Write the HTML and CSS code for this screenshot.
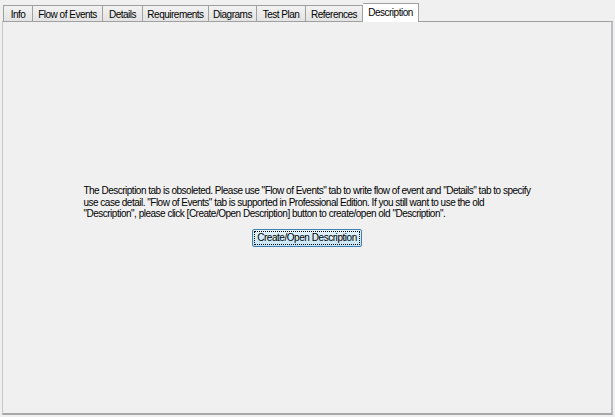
FILE: index.html
```html
<!DOCTYPE html>
<html>
<head>
<meta charset="utf-8">
<link rel="stylesheet" href="styles.css">
</head>
<body>
<div class="app">
  <div class="tabs">
    <div class="tab t-info">Info</div>
    <div class="tab t-flow">Flow of Events</div>
    <div class="tab t-details">Details</div>
    <div class="tab t-req">Requirements</div>
    <div class="tab t-diag">Diagrams</div>
    <div class="tab t-test">Test Plan</div>
    <div class="tab t-ref">References</div>
    <div class="tab active t-desc">Description</div>
  </div>
  <div class="panel">
    <div class="content">
      <p class="msg">The Description tab is obsoleted. Please use "Flow of Events" tab to write flow of event and "Details" tab to specify<br>use case detail. "Flow of Events" tab is supported in Professional Edition. If you still want to use the old<br>"Description", please click [Create/Open Description] button to create/open old "Description".</p>
      <button class="btn"><span class="focus">Create/Open Description</span></button>
    </div>
  </div>
</div>
</body>
</html>
```

FILE: styles.css
```css
html, body {
  margin: 0;
  padding: 0;
  background: #f0f0f0;
}
body {
  width: 615px;
  height: 417px;
  overflow: hidden;
  font-family: "Liberation Sans", Arial, sans-serif;
  font-size: 10px;
  letter-spacing: -0.5px;
  color: #000;
}
.app {
  padding: 3px 2px 2px 2px;
  height: 417px;
  box-sizing: border-box;
  display: flex;
  flex-direction: column;
}
.tabs {
  display: flex;
  align-items: flex-end;
  height: 18px;
  padding-left: 1px;
  position: relative;
  z-index: 1;
}
.tab {
  box-sizing: border-box;
  height: 16px;
  border: 1px solid #a0a0a0;
  border-bottom: none;
  border-left: none;
  background: linear-gradient(#f2f2f2, #e3e3e3);
  display: flex;
  align-items: center;
  justify-content: center;
  padding-top: 1px;
  white-space: nowrap;
}
.t-info { width: 30px; border-left: 1px solid #a0a0a0; }
.t-flow { width: 70px; }
.t-details { width: 40px; }
.t-req { width: 66px; }
.t-diag { width: 48px; }
.t-test { width: 49px; }
.t-ref { width: 57px; }
.t-desc { width: 56px; }
.tab.active {
  height: 19px;
  background: #ffffff;
  border-left: none;
  margin-bottom: -1px;
  padding-top: 0;
  padding-bottom: 2px;
}
.panel {
  flex: 1;
  border-top: 1px solid #a0a0a0;
  border-left: 1px solid #c8c8c8;
  border-right: 2px solid #bcbcc4;
  border-bottom: 2px solid #a8a8a8;
  background: #f0f0f0;
  display: flex;
  align-items: center;
  justify-content: center;
}
.content {
  display: flex;
  flex-direction: column;
  align-items: center;
  margin-top: -3px;
}
.msg {
  margin: 0;
  line-height: 11.5px;
  white-space: nowrap;
}
.btn {
  margin-top: 9px;
  height: 18px;
  width: 110px;
  padding: 1px;
  border: 1px solid #3c7fb1;
  border-radius: 2px;
  background: linear-gradient(#e5f4fc, #c4e5f6);
  font-family: inherit;
  font-size: 10px;
  letter-spacing: -0.45px;
  color: #000;
  display: flex;
  white-space: nowrap;
}
.focus {
  flex: 1;
  border: 1px dotted #000;
  display: flex;
  align-items: center;
  justify-content: center;
  line-height: 12px;
}
```
